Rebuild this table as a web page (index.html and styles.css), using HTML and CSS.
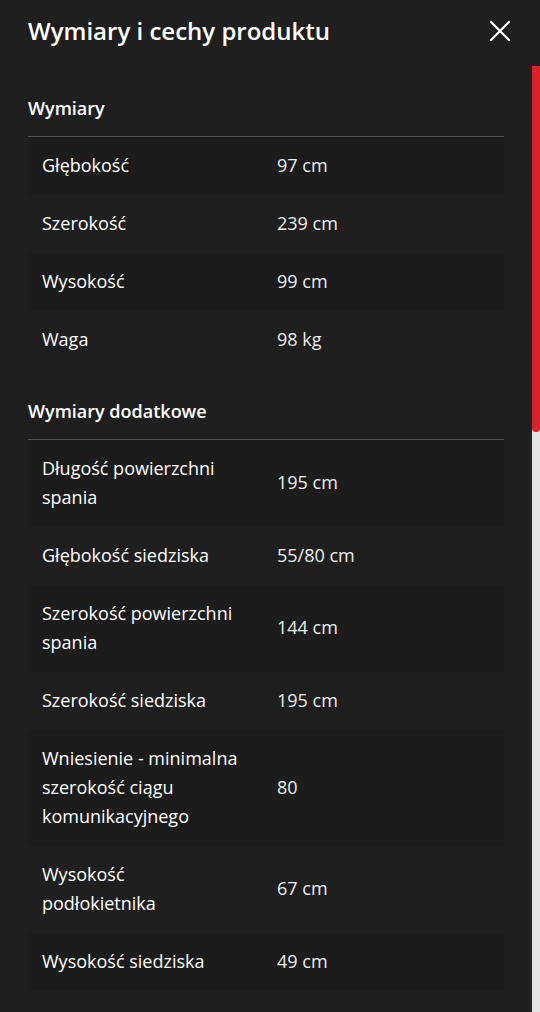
FILE: index.html
```html
<!DOCTYPE html>
<html lang="pl">
<head>
<meta charset="utf-8">
<link rel="stylesheet" href="styles.css">
</head>
<body>
<div class="dialog">
  <header class="head">
    <h1 class="title">Wymiary i cechy produktu</h1>
    <button class="close" aria-label="Zamknij">
      <svg width="22" height="22" viewBox="0 0 22 22"><path d="M2 2L20 20M20 2L2 20" stroke="#fff" stroke-width="2.2" stroke-linecap="round"/></svg>
    </button>
  </header>
  <div class="body">
    <main class="content">
      <section class="group">
        <h2 class="group-title">Wymiary</h2>
        <dl class="rows">
          <div class="row"><dt>Głębokość</dt><dd>97 cm</dd></div>
          <div class="row"><dt>Szerokość</dt><dd>239 cm</dd></div>
          <div class="row"><dt>Wysokość</dt><dd>99 cm</dd></div>
          <div class="row"><dt>Waga</dt><dd>98 kg</dd></div>
        </dl>
      </section>
      <section class="group">
        <h2 class="group-title">Wymiary dodatkowe</h2>
        <dl class="rows">
          <div class="row"><dt>Długość powierzchni spania</dt><dd>195 cm</dd></div>
          <div class="row"><dt>Głębokość siedziska</dt><dd>55/80 cm</dd></div>
          <div class="row"><dt>Szerokość powierzchni spania</dt><dd>144 cm</dd></div>
          <div class="row"><dt>Szerokość siedziska</dt><dd>195 cm</dd></div>
          <div class="row"><dt>Wniesienie - minimalna szerokość ciągu komunikacyjnego</dt><dd>80</dd></div>
          <div class="row"><dt>Wysokość podłokietnika</dt><dd>67 cm</dd></div>
          <div class="row"><dt>Wysokość siedziska</dt><dd>49 cm</dd></div>
        </dl>
      </section>
    </main>
    <div class="scrollbar"><div class="thumb"></div></div>
  </div>
</div>
</body>
</html>
```
FILE: styles.css
```css
* { box-sizing: border-box; }
html, body { margin: 0; padding: 0; }
body {
  background: #1f1f1f;
  color: #fff;
  font-family: "Open Sans", "Noto Sans", sans-serif;
  width: 540px;
  height: 1012px;
  overflow: hidden;
}
.dialog { display: flex; flex-direction: column; height: 1012px; }
.head {
  height: 66px;
  flex: none;
  display: flex;
  align-items: center;
  justify-content: space-between;
  padding: 0 29px 4px 28px;
}
.title {
  margin: 0;
  font-size: 24px;
  font-weight: 600;
  line-height: 32px;
}
.close {
  background: none;
  border: 0;
  padding: 0;
  width: 22px;
  height: 22px;
  display: flex;
}
.body { flex: 1; display: flex; min-height: 0; }
.content { flex: 1; padding: 24px 28px 0 28px; }
.scrollbar { width: 8px; flex: none; background: #e3e3e3; }
.thumb { height: 366px; background: #d9232a; border-radius: 0 0 4px 4px; }
.group + .group { margin-top: 24px; }
.group-title {
  margin: 0;
  font-size: 18px;
  font-weight: 600;
  line-height: 36px;
  padding-bottom: 10px;
  border-bottom: 1px solid #4f4f4f;
}
.rows { margin: 0; }
.row {
  display: grid;
  grid-template-columns: 198px 1fr;
  column-gap: 37px;
  align-items: center;
  padding: 13.5px 14px 15.5px;
  font-size: 18px;
  line-height: 29px;
}
.row:nth-child(odd) { background: #1c1c1c; }
.row dt { color: #fff; font-weight: 500; }
.row dd { margin: 0; color: #ececec; font-weight: 400; }
```
